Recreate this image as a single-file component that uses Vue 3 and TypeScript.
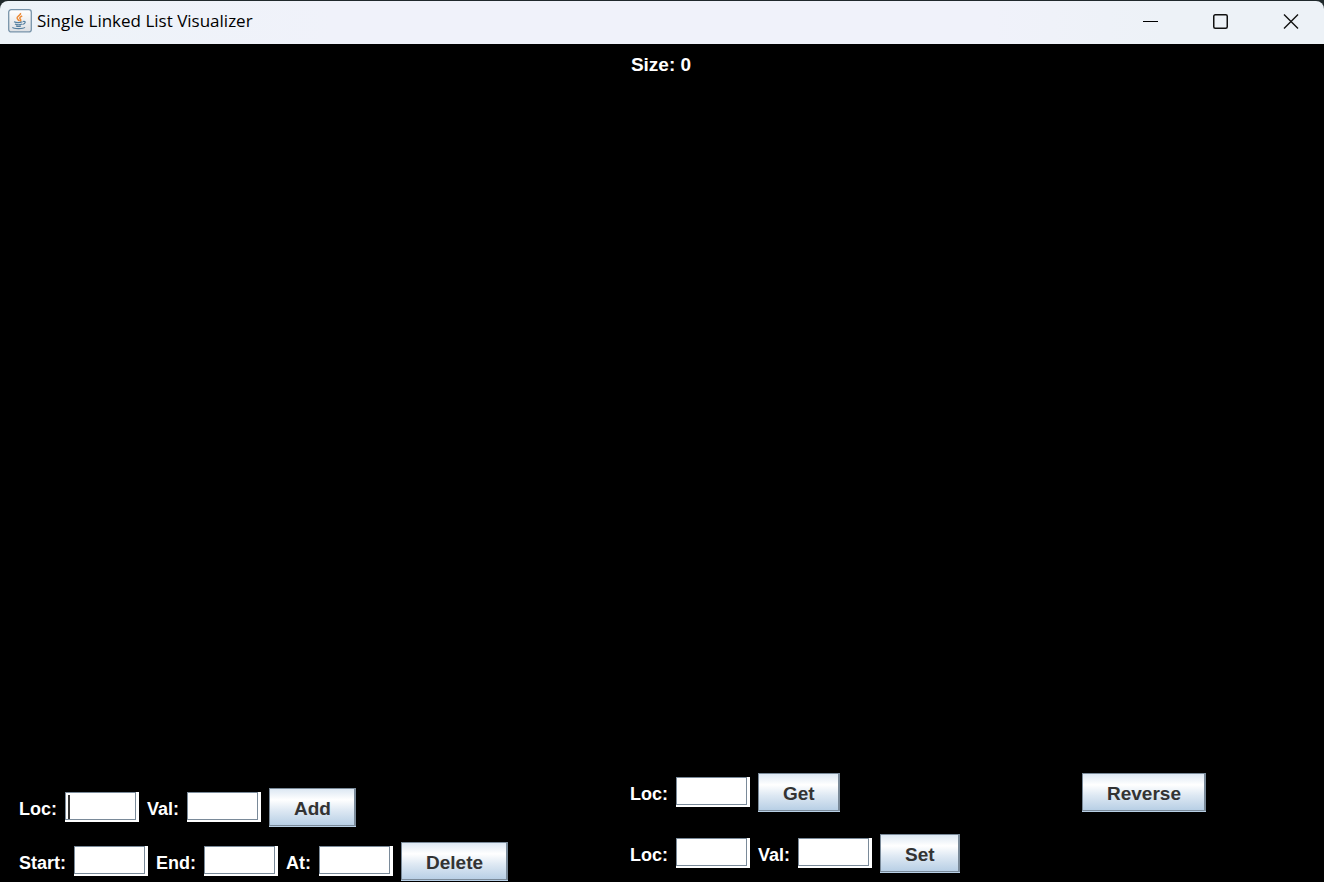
<script setup lang="ts">
import { ref } from 'vue'

interface Field {
  id: string
  label: string
  active?: boolean
}

interface Operation {
  name: string
  fields: Field[]
}

const size = ref(0)

const groups: { key: string; operations: Operation[] }[] = [
  {
    key: 'edit',
    operations: [
      {
        name: 'Add',
        fields: [
          { id: 'add-loc', label: 'Loc:', active: true },
          { id: 'add-val', label: 'Val:' },
        ],
      },
      {
        name: 'Delete',
        fields: [
          { id: 'delete-start', label: 'Start:' },
          { id: 'delete-end', label: 'End:' },
          { id: 'delete-at', label: 'At:' },
        ],
      },
    ],
  },
  {
    key: 'access',
    operations: [
      { name: 'Get', fields: [{ id: 'get-loc', label: 'Loc:' }] },
      {
        name: 'Set',
        fields: [
          { id: 'set-loc', label: 'Loc:' },
          { id: 'set-val', label: 'Val:' },
        ],
      },
    ],
  },
  { key: 'order', operations: [{ name: 'Reverse', fields: [] }] },
]

const values = ref<Record<string, string>>({})
</script>

<template>
  <div class="window">
    <header class="titlebar">
      <svg class="app-icon" width="24" height="24" viewBox="0 0 24 24" aria-hidden="true">
        <defs>
          <linearGradient id="tile" x1="0" y1="0" x2="0" y2="1">
            <stop offset="0" stop-color="#ffffff" />
            <stop offset="1" stop-color="#dcdfe3" />
          </linearGradient>
        </defs>
        <rect x="0.7" y="0.7" width="22.6" height="22.2" rx="2.5" fill="url(#tile)" stroke="#7894aa" stroke-width="1.3" />
        <path d="M12.5 4c1 2-3.700 3-3.400 5 .1 1.200 1.500 2 2 3M14.200 7c-2.500 1-3 2-1.800 3.300.7.8.2 1.500-.6 2" fill="none" stroke="#ed8b37" stroke-width="1.500" />
        <path d="M6 12.800c2 .9 6 .9 8.500 0M7 15c2 .9 5 .9 7 0M8 17c1.500.6 3.500.6 5 0M15 12.500c3.200-.8 2.800 2.200-.5 3M4.500 18.200c1 1.800 10.500 1.800 12.500.2" fill="none" stroke="#557f9f" stroke-width="1.200" />
      </svg>
      <h1 class="title">Single Linked List Visualizer</h1>
      <div class="controls">
        <button type="button" aria-label="Minimize">
          <svg width="16" height="16" viewBox="0 0 16 16"><path d="M0 8.500H15" stroke="#000" fill="none" /></svg>
        </button>
        <button type="button" aria-label="Maximize">
          <svg width="16" height="16" viewBox="0 0 16 16"><rect x="0.750" y="1.750" width="13.500" height="13.500" rx="1.500" stroke="#111" stroke-width="1.500" fill="none" /></svg>
        </button>
        <button type="button" aria-label="Close">
          <svg width="16" height="16" viewBox="0 0 16 16"><path d="M1 1.500L15 15.500M15 1.500L1 15.500" stroke="#111" stroke-width="1.400" fill="none" /></svg>
        </button>
      </div>
    </header>

    <main class="canvas">
      <p class="size">Size: {{ size }}</p>
    </main>

    <footer class="panel">
      <div v-for="group in groups" :key="group.key" class="group" :class="group.key">
        <form v-for="op in group.operations" :key="op.name" class="operation" @submit.prevent>
          <template v-for="field in op.fields" :key="field.id">
            <label :for="field.id">{{ field.label }}</label>
            <input :id="field.id" v-model="values[field.id]" type="text" :class="{ active: field.active }" />
          </template>
          <button class="action" type="submit">{{ op.name }}</button>
        </form>
      </div>
    </footer>
  </div>
</template>

<style>
html {
  background: #20292c;
}
</style>

<style scoped>
.window {
  box-sizing: border-box;
  min-height: 100vh;
  display: flex;
  flex-direction: column;
  padding-top: 1px;
  font-family: "Liberation Sans", Arial, sans-serif;
  font-size: 19px;
  font-weight: 700;
  line-height: 22px;
  color: #fff;
}

.titlebar {
  box-sizing: border-box;
  display: flex;
  align-items: center;
  height: 43px;
  padding: 0 0 3px 8px;
  border-radius: 8px 8px 0 0;
  background: linear-gradient(90deg, #edf3f8 0, #f0f2fa 25%, #f0f2fa 75%, #edf2f7 88%);
  color: #000;
}

.app-icon {
  flex: none;
}

.title {
  flex: 1;
  margin: 0 0 0 5px;
  font-family: "Open Sans", "Segoe UI", sans-serif;
  font-size: 17px;
  font-weight: 400;
}

.controls {
  display: grid;
  grid-template-columns: repeat(3, 70px);
  align-self: stretch;
}

.controls button {
  display: flex;
  align-items: center;
  justify-content: center;
  padding: 0 0 0 3px;
  border: 0;
  background: none;
}

.canvas {
  flex: 1;
  background: #000;
}

.size {
  margin: 10px 0 0;
  padding-right: 2px;
  text-align: center;
}

.panel {
  display: grid;
  grid-template-columns: 611fr 452fr 242fr;
  align-items: start;
  padding: 0 0 1px 19px;
  background: #000;
}

.group {
  display: grid;
  gap: 15px;
}

.edit {
  padding-top: 15px;
}

.access {
  gap: 22px;
}

.operation {
  display: flex;
  align-items: center;
  gap: 8px;
}

label {
  padding-top: 2px;
  font-size: 18px;
}

input {
  box-sizing: border-box;
  width: 71px;
  height: 28px;
  margin: 0 3px 4px 0;
  padding: 0 2px;
  border: 1px solid #7a8a99;
  border-radius: 0;
  outline: 0;
  background: #fff;
  box-shadow: 3px 0 #fff, 0 2px #fff, 3px 2px #fff;
  color: #333;
  font: inherit;
}

input.active {
  background: linear-gradient(#333, #333) 2px 2px / 2px 24px no-repeat #fff;
}

.action {
  height: 38px;
  margin-bottom: 1px;
  padding: 3px 23px 0 24px;
  border: 1px solid #7a8a99;
  border-right-width: 2px;
  border-radius: 0;
  background: linear-gradient(#dde8f3, #fff 30%, #dde8f3 60%, #b8cfe5);
  box-shadow: 0 1px #b8cfe5;
  color: #333;
  font: inherit;
}
</style>
